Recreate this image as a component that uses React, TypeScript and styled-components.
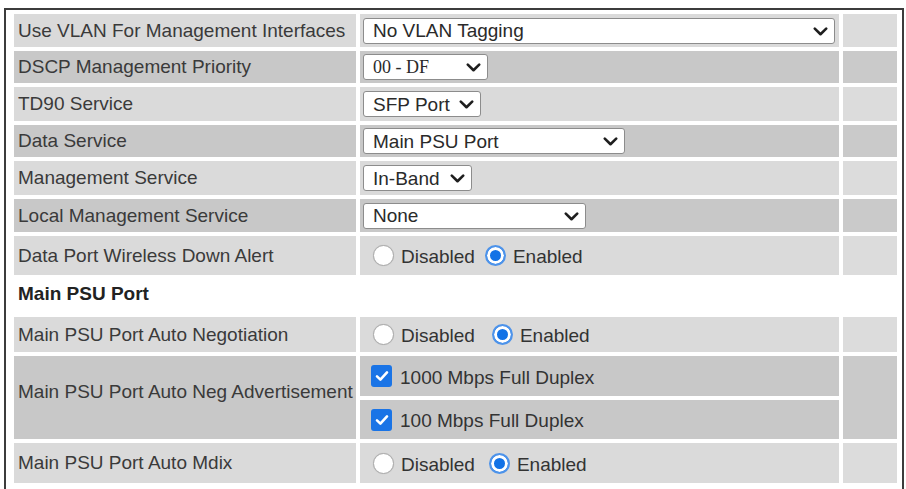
import React from "react";
import styled, { createGlobalStyle, css } from "styled-components";

const GlobalStyle = createGlobalStyle`
  html, body { margin: 0; padding: 0; background: #ffffff; }
  body { font-family: "Liberation Sans", Arial, sans-serif; }
`;

type Tone = "light" | "dark";
const toneColor = (t: Tone) => (t === "light" ? "#dadada" : "#c8c8c8");

const Frame = styled.div`
  box-sizing: border-box;
  width: 900px;
  margin: 8px 0 0 4px;
  border: 2px solid #3c3c3c;
  border-bottom: none;
  padding: 4px 5px 6px 8px;
  background: #ffffff;
`;

const Grid = styled.div`
  display: grid;
  grid-template-columns: 342px 479px 54px;
  grid-template-rows: 33px 32px 34px 32px 34px 33px 39px 34px 35px 40px 39px 40px;
  gap: 4px;
`;

const LabelCell = styled.div<{ $tone: Tone; $span?: number; $lift?: number }>`
  background: ${(p) => toneColor(p.$tone)};
  display: flex;
  align-items: center;
  padding: 0 0 ${(p) => p.$lift ?? 0}px 4px;
  font-size: 19px;
  color: #3a3a3a;
  white-space: nowrap;
  ${(p) =>
    p.$span &&
    css`
      grid-row: span ${p.$span};
    `}
`;

const ControlCell = styled.div<{ $tone: Tone; $pad?: number }>`
  background: ${(p) => toneColor(p.$tone)};
  display: flex;
  align-items: center;
  padding-left: ${(p) => p.$pad ?? 3}px;
  font-size: 19px;
  color: #333333;
  white-space: nowrap;
`;

const SpareCell = styled.div<{ $tone: Tone; $span?: number }>`
  background: ${(p) => (p.$tone === "light" ? "#dcdcdc" : "#cacaca")};
  ${(p) =>
    p.$span &&
    css`
      grid-row: span ${p.$span};
    `}
`;

const SectionHeader = styled.div`
  grid-column: 1 / -1;
  display: flex;
  align-items: center;
  padding: 0 0 4px 4px;
  font-size: 19px;
  font-weight: bold;
  color: #222222;
  background: #ffffff;
`;

const SelectWrap = styled.div<{ $width: number }>`
  position: relative;
  display: inline-flex;
  width: ${(p) => p.$width}px;
  height: 26px;
`;

const NativeSelect = styled.select<{ $serif?: boolean }>`
  appearance: none;
  -webkit-appearance: none;
  width: 100%;
  height: 100%;
  box-sizing: border-box;
  margin: 0;
  border: 1px solid #8c8c8c;
  border-radius: 3px;
  background: #ffffff;
  padding: 0 0 0 9px;
  font-family: ${(p) =>
    p.$serif ? `"Liberation Serif", "Times New Roman", serif` : `"Liberation Sans", Arial, sans-serif`};
  font-size: ${(p) => (p.$serif ? "18px" : "19px")};
  color: #2a2a2a;
  outline: none;
`;

const Chevron = styled.svg`
  position: absolute;
  right: 7px;
  top: 50%;
  width: 15px;
  height: 9px;
  margin-top: -4px;
  pointer-events: none;
`;

const Choice = styled.label<{ $gap?: number }>`
  display: inline-flex;
  align-items: center;
  margin-right: ${(p) => p.$gap ?? 10}px;
  padding-top: 3px;
  color: #333333;
`;

const RadioDot = styled.span<{ $checked?: boolean }>`
  box-sizing: border-box;
  display: inline-block;
  width: 21px;
  height: 21px;
  border-radius: 50%;
  margin-right: 7px;
  margin-top: -3px;
  ${(p) =>
    p.$checked
      ? css`
          border: 2px solid #4d93ea;
          background: #1272e6;
          box-shadow: inset 0 0 0 3px #ffffff;
        `
      : css`
          border: 1px solid #a9a9a9;
          background: #ffffff;
          box-shadow: 0 0 1px rgba(0, 0, 0, 0.15);
        `}
`;

const CheckBox = styled.span`
  box-sizing: border-box;
  display: inline-flex;
  align-items: center;
  justify-content: center;
  width: 21px;
  height: 22px;
  border-radius: 3px;
  background: #1a74e6;
  margin-right: 8px;
  margin-top: -3px;
`;

const Select: React.FC<{ width: number; value: string; serif?: boolean }> = ({ width, value, serif }) => (
  <SelectWrap $width={width}>
    <NativeSelect $serif={serif} defaultValue={value}>
      <option value={value}>{value}</option>
    </NativeSelect>
    <Chevron viewBox="0 0 15 9">
      <path d="M1.8 1.6 L7.5 7.2 L13.2 1.6" fill="none" stroke="#1e1e1e" strokeWidth="2.6" strokeLinecap="round" strokeLinejoin="round" />
    </Chevron>
  </SelectWrap>
);

const RadioPair: React.FC<{ gap?: number }> = ({ gap }) => (
  <>
    <Choice $gap={gap}>
      <RadioDot />
      Disabled
    </Choice>
    <Choice>
      <RadioDot $checked />
      Enabled
    </Choice>
  </>
);

const Check: React.FC<{ text: string }> = ({ text }) => (
  <Choice>
    <CheckBox>
      <svg width="14" height="12" viewBox="0 0 14 12">
        <path d="M2 6.4 L5.4 9.6 L12 2.4" fill="none" stroke="#ffffff" strokeWidth="2.6" strokeLinecap="round" strokeLinejoin="round" />
      </svg>
    </CheckBox>
    {text}
  </Choice>
);

const selectRows: { label: string; value: string; width: number; tone: Tone; serif?: boolean }[] = [
  { label: "Use VLAN For Management Interfaces", value: "No VLAN Tagging", width: 472, tone: "light" },
  { label: "DSCP Management Priority", value: "00 - DF", width: 125, tone: "dark", serif: true },
  { label: "TD90 Service", value: "SFP Port", width: 118, tone: "light" },
  { label: "Data Service", value: "Main PSU Port", width: 262, tone: "dark" },
  { label: "Management Service", value: "In-Band", width: 109, tone: "light" },
  { label: "Local Management Service", value: "None", width: 223, tone: "dark" },
];

export default function App() {
  return (
    <>
      <GlobalStyle />
      <Frame>
        <Grid>
          {selectRows.map((r) => (
            <React.Fragment key={r.label}>
              <LabelCell $tone={r.tone}>{r.label}</LabelCell>
              <ControlCell $tone={r.tone}>
                <Select width={r.width} value={r.value} serif={r.serif} />
              </ControlCell>
              <SpareCell $tone={r.tone} />
            </React.Fragment>
          ))}

          <LabelCell $tone="light">Data Port Wireless Down Alert</LabelCell>
          <ControlCell $tone="light" $pad={13}>
            <RadioPair gap={10} />
          </ControlCell>
          <SpareCell $tone="light" />

          <SectionHeader>Main PSU Port</SectionHeader>

          <LabelCell $tone="light">Main PSU Port Auto Negotiation</LabelCell>
          <ControlCell $tone="light" $pad={13}>
            <RadioPair gap={17} />
          </ControlCell>
          <SpareCell $tone="light" />

          <LabelCell $tone="dark" $span={2} $lift={12}>
            Main PSU Port Auto Neg Advertisement
          </LabelCell>
          <ControlCell $tone="dark" $pad={11}>
            <Check text="1000 Mbps Full Duplex" />
          </ControlCell>
          <SpareCell $tone="dark" $span={2} />
          <ControlCell $tone="dark" $pad={11}>
            <Check text="100 Mbps Full Duplex" />
          </ControlCell>

          <LabelCell $tone="light">Main PSU Port Auto Mdix</LabelCell>
          <ControlCell $tone="light" $pad={13}>
            <RadioPair gap={14} />
          </ControlCell>
          <SpareCell $tone="light" />
        </Grid>
      </Frame>
    </>
  );
}
